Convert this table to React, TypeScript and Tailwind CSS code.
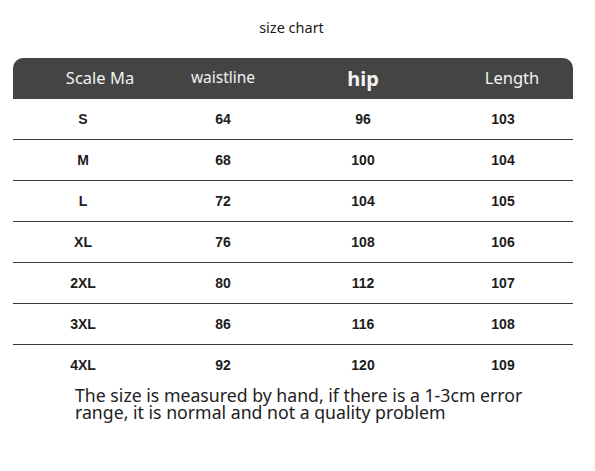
const rows = [
  ['S', '64', '96', '103'],
  ['M', '68', '100', '104'],
  ['L', '72', '104', '105'],
  ['XL', '76', '108', '106'],
  ['2XL', '80', '112', '107'],
  ['3XL', '86', '116', '108'],
  ['4XL', '92', '120', '109'],
];

export default function App() {
  return (
    <div className="w-[595px] h-[471px] bg-white font-['Noto_Sans',sans-serif] text-[#222]">
      <div className="pt-[17px] pr-[12px] text-center text-[14.5px] leading-[20px] text-[#1a1a1a]">size chart</div>

      <div className="mx-[13px] mt-[21px] w-[560px]">
        <div className="grid grid-cols-4 h-[41px] items-center rounded-t-[10px] bg-[#444444] text-[#f2f2f2]">
          <div className="text-center text-[16.5px] pl-[34px]">Scale Ma</div>
          <div className="text-center text-[15.5px] pb-[2px]">waistline</div>
          <div className="text-center text-[20px] font-bold">hip</div>
          <div className="text-center text-[16.5px] pl-[18px] pb-[1px]">Length</div>
        </div>

        {rows.map((r, i) => (
          <div
            key={r[0]}
            className={
              'grid grid-cols-4 h-[41px] items-center font-["Liberation_Sans",sans-serif] font-bold text-[14px] text-[#1c1c1c] ' +
              (i < rows.length - 1 ? 'border-b-[1.5px] border-[#3a3a3a]' : '')
            }
          >
            {r.map((c, j) => (
              <div key={j} className="text-center">
                {c}
              </div>
            ))}
          </div>
        ))}
      </div>

      <p className="ml-[75px] mt-[1px] w-[490px] text-[17.7px] leading-[17px] text-[#222]">
        The size is measured by hand, if there is a 1-3cm error range, it is normal and not a quality problem
      </p>
    </div>
  );
}
